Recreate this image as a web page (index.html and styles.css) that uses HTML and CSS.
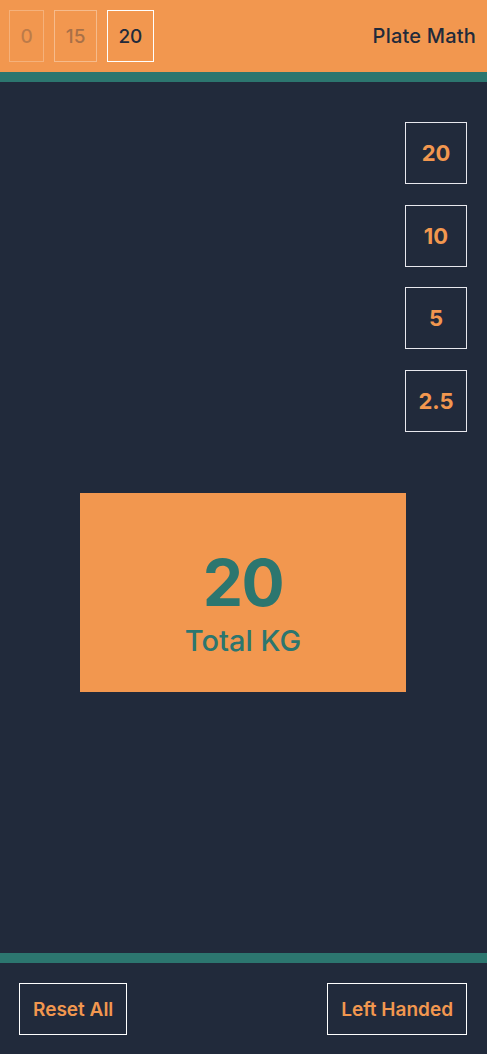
FILE: index.html
```html
<!DOCTYPE html>
<html lang="en">
<head>
<meta charset="utf-8">
<title>Plate Math</title>
<link rel="stylesheet" href="styles.css">
</head>
<body>
<div class="app">
  <header class="topbar">
    <div class="bars">
      <button class="bar bar-faint">0</button>
      <button class="bar bar-dim">15</button>
      <button class="bar bar-active">20</button>
    </div>
    <div class="title">Plate Math</div>
  </header>
  <main class="main">
    <div class="plates">
      <button class="plate">20</button>
      <button class="plate">10</button>
      <button class="plate">5</button>
      <button class="plate">2.5</button>
    </div>
    <div class="total">
      <div class="total-num">20</div>
      <div class="total-label">Total KG</div>
    </div>
  </main>
  <footer class="footer">
    <button class="action">Reset All</button>
    <button class="action">Left Handed</button>
  </footer>
</div>
</body>
</html>
```
FILE: styles.css
```css
* { box-sizing: border-box; }
html, body { margin: 0; padding: 0; }
body {
  background: #212a3b;
  font-family: Inter, "Noto Sans", sans-serif;
}
button { font-family: inherit; cursor: pointer; }
.app {
  display: flex;
  flex-direction: column;
  height: 1054px;
}
.topbar {
  height: 82px;
  background: #f2974f;
  border-bottom: 10px solid #2c766f;
  display: flex;
  align-items: center;
  justify-content: space-between;
  padding: 0 11px 0 9px;
}
.bars { display: flex; gap: 10px; }
.bar {
  height: 52px;
  padding: 0 10.5px;
  background: transparent;
  border: 1px solid #ffffff;
  color: #212a3b;
  font-size: 19px;
  font-weight: 500;
}
.bar-faint { opacity: 0.25; }
.bar-dim { opacity: 0.35; }
.title {
  color: #212a3b;
  font-size: 20px;
  font-weight: 500;
  letter-spacing: 0.2px;
}
.main {
  flex: 1;
  display: flex;
  flex-direction: column;
}
.plates {
  align-self: flex-end;
  margin: 40px 20px 0 0;
  display: flex;
  flex-direction: column;
  gap: 20.5px;
}
.plate {
  width: 62px;
  height: 62px;
  background: transparent;
  border: 1px solid #e8e8ee;
  color: #f2974f;
  font-size: 22px;
  font-weight: 700;
  padding: 0;
}
.total {
  align-self: center;
  margin: 61px 1px 0 0;
  width: 326px;
  height: 199px;
  background: #f2974f;
  display: flex;
  flex-direction: column;
  align-items: center;
  justify-content: center;
  color: #2c766f;
  padding-top: 24px;
}
.total-num {
  font-size: 64px;
  font-weight: 700;
  line-height: 64px;
  letter-spacing: -1.5px;
}
.total-label {
  font-size: 29px;
  font-weight: 500;
  line-height: 34px;
  margin-top: 9px;
}
.footer {
  height: 101px;
  border-top: 10px solid #2c766f;
  display: flex;
  justify-content: space-between;
  align-items: flex-start;
  padding: 20px 20px 0 19px;
}
.action {
  height: 52px;
  padding: 0 13px;
  background: transparent;
  border: 1px solid #ffffff;
  color: #f2974f;
  font-size: 19px;
  font-weight: 600;
}
```
